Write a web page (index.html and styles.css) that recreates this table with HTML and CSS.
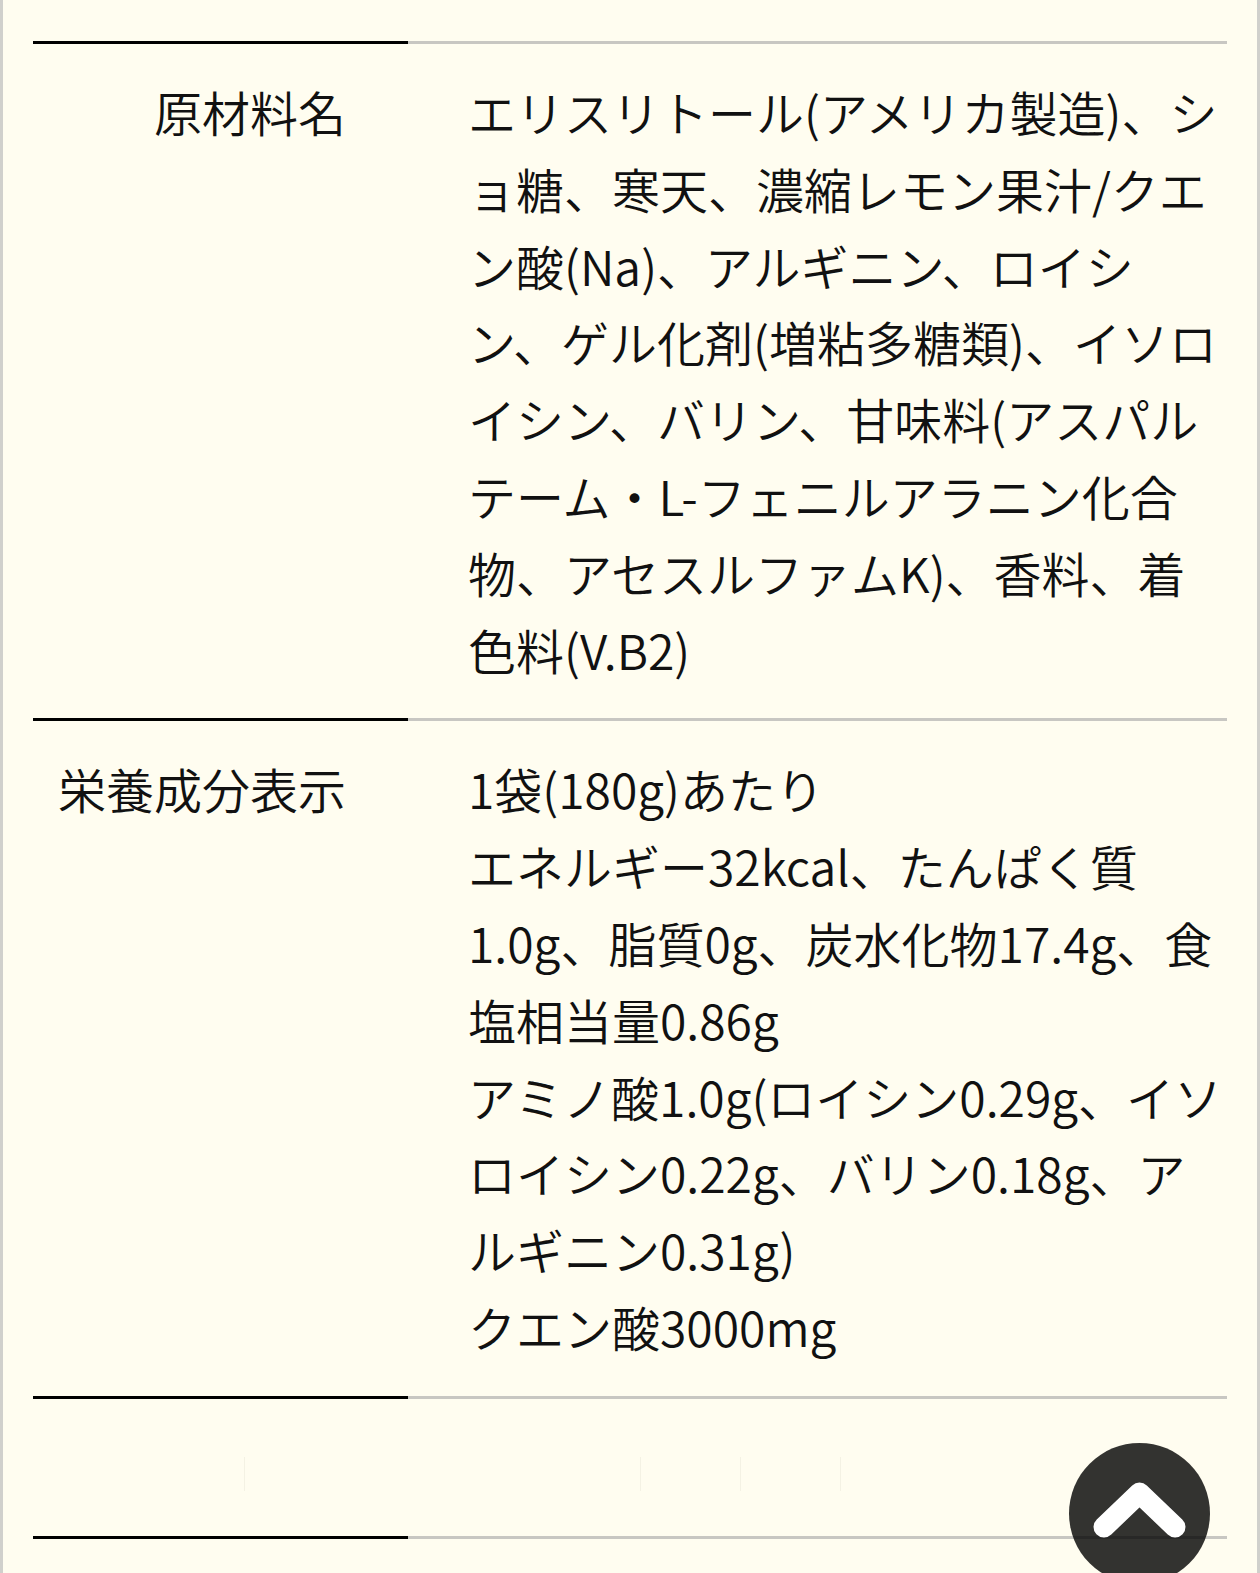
FILE: index.html
```html
<!DOCTYPE html>
<html lang="ja">
<head>
<meta charset="utf-8">
<title>商品情報</title>
<link rel="stylesheet" href="styles.css">
</head>
<body>
<div class="page">
  <table class="spec">
    <tbody>
      <tr>
        <th>原材料名</th>
        <td>エリスリトール(アメリカ製造)、ショ糖、寒天、濃縮レモン果汁/クエン酸(Na)、アルギニン、ロイシン、ゲル化剤(増粘多糖類)、イソロイシン、バリン、甘味料(アスパルテーム・L-フェニルアラニン化合物、アセスルファムK)、香料、着色料(V.B2)</td>
      </tr>
      <tr>
        <th>栄養成分表示</th>
        <td>1袋(180g)あたり<br>エネルギー32kcal、たんぱく質1.0g、脂質0g、炭水化物17.4g、食塩相当量0.86g<br>アミノ酸1.0g(ロイシン0.29g、イソロイシン0.22g、バリン0.18g、アルギニン0.31g)<br>クエン酸3000mg</td>
      </tr>
      <tr class="ghost">
        <th><span class="mark"></span></th>
        <td><span class="mark m1"></span><span class="mark m2"></span><span class="mark m3"></span></td>
      </tr>
      <tr>
        <th>&nbsp;</th>
        <td>&nbsp;</td>
      </tr>
    </tbody>
  </table>
</div>
<a class="to-top" href="#" aria-label="ページトップへ">
  <svg viewBox="0 0 141 141" width="141" height="141" aria-hidden="true">
    <circle cx="70.5" cy="70.5" r="70.5" fill="rgba(0,0,0,0.8)"/>
    <polyline points="35,84 70.5,50 106,84" fill="none" stroke="#ffffff" stroke-width="21" stroke-linecap="round" stroke-linejoin="round"/>
  </svg>
</a>
</body>
</html>
```
FILE: styles.css
```css
html, body {
  margin: 0;
  padding: 0;
  background: #fffdf0;
}

body {
  font-family: "Noto Sans CJK JP", "Noto Sans", sans-serif;
  color: #111;
}

.page {
  border-left: 3px solid #d0d0cc;
  border-right: 3px solid #d0d0cc;
  padding: 41px 30px 0;
  min-height: 1600px;
  box-sizing: border-box;
}

.spec {
  width: 100%;
  border-collapse: separate;
  border-spacing: 0;
  font-size: 48px;
  font-weight: 350;
  line-height: 1.6;
}

.spec th,
.spec td {
  vertical-align: top;
  padding-top: 29px;
  padding-bottom: 31px;
}

.spec th {
  width: 375px;
  box-sizing: border-box;
  text-align: right;
  font-weight: 350;
  padding-right: 62px;
  padding-left: 0;
  border-top: 3px solid #000;
}

.spec td {
  text-align: left;
  padding-left: 60px;
  padding-right: 2px;
  border-top: 3px solid #c8c7c2;
}

.ghost .mark {
  display: inline-block;
  width: 1px;
  height: 34px;
  background: #f4f2e4;
  vertical-align: middle;
}

.ghost th .mark {
  margin-right: 101px;
}

.ghost td .mark {
  margin-right: 99px;
}

.ghost td .m1 {
  margin-left: 172px;
}

.to-top {
  position: fixed;
  left: 1069px;
  top: 1443px;
  width: 141px;
  height: 141px;
  display: block;
}

.to-top svg {
  display: block;
}
```
